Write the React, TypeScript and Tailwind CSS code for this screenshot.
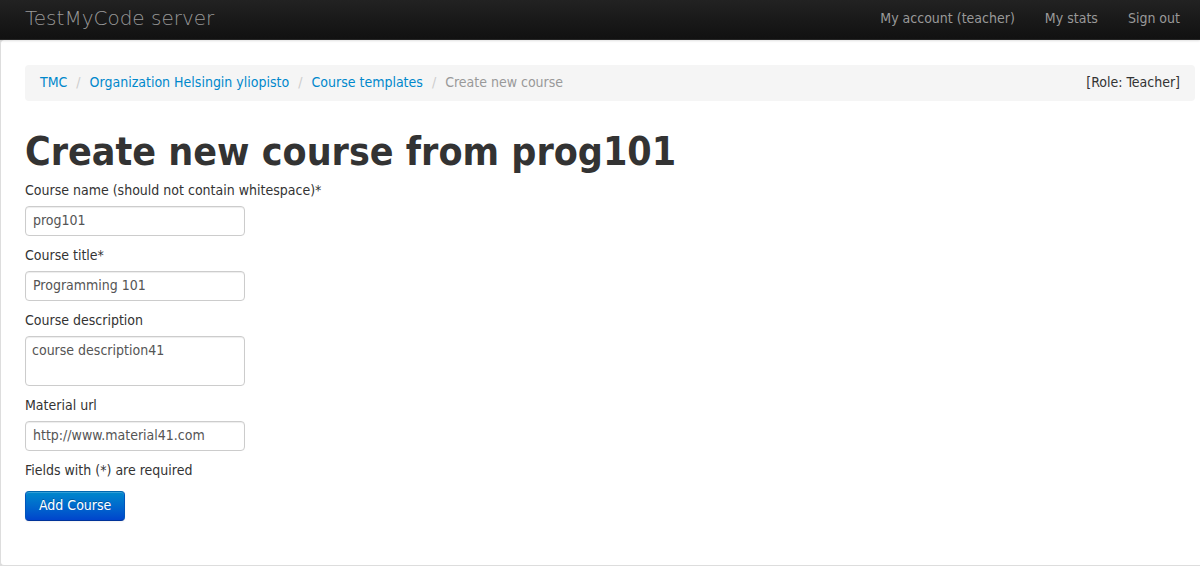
import type { ReactNode } from "react";

const navLinks = ["My account (teacher)", "My stats", "Sign out"];
const crumbs = ["TMC", "Organization Helsingin yliopisto", "Course templates"];

const control =
  "block w-[220px] rounded-[4px] border border-[#cccccc] bg-white text-sm leading-5 text-[#555555] shadow-[inset_0_1px_1px_rgba(0,0,0,0.075)] outline-none focus:border-[#52a8ec]";

function Field({ id, label, children }: { id: string; label: string; children: ReactNode }) {
  return (
    <div className="mb-2.5">
      <label htmlFor={id} className="mb-[7px] block">
        {label}
      </label>
      {children}
    </div>
  );
}

function TextField({ id, label, value }: { id: string; label: string; value: string }) {
  return (
    <Field id={id} label={label}>
      <input id={id} type="text" defaultValue={value} className={`${control} h-[30px] px-[7px] pt-[3px] pb-[5px]`} />
    </Field>
  );
}

export default function App() {
  return (
    <div className="bg-[#dddddd] font-['DejaVu_Sans_Condensed','DejaVu_Sans',sans-serif] text-sm leading-[18px] text-[#333333]">
      <header className="relative flex h-10 items-center justify-between border-b border-[#252525] bg-linear-to-b from-[#222222] to-[#111111] pr-5 pb-1 pl-[25px] shadow-[0_1px_2px_rgba(0,0,0,0.12)]">
        <a
          href="#"
          className="font-['DejaVu_Sans_Light','DejaVu_Sans',sans-serif] text-xl leading-5 font-extralight text-[#999999]"
        >
          TestMyCode server
        </a>
        <nav className="flex gap-[30px] text-[#999999]">
          {navLinks.map((link) => (
            <a key={link} href="#" className="hover:text-white">
              {link}
            </a>
          ))}
        </nav>
      </header>

      <main className="rounded-l-[4px] border-b border-l border-[#dddddd] bg-white pt-[25px] pr-[5px] pb-11 pl-6">
        <div className="mb-[30px] flex items-center justify-between rounded-[4px] bg-[#f5f5f5] px-[15px] pt-2 pb-2.5">
          <nav aria-label="Breadcrumb">
            <ol className="flex">
              {crumbs.map((crumb) => (
                <li key={crumb} className="flex">
                  <a href="#" className="text-[#0088cc] hover:underline">
                    {crumb}
                  </a>
                  <span className="px-[9px] text-[#cccccc]">/</span>
                </li>
              ))}
              <li className="text-[#999999]">Create new course</li>
            </ol>
          </nav>
          <span>[Role: Teacher]</span>
        </div>

        <h1 className="mb-2 text-[39px] leading-[42px] font-bold">Create new course from prog101</h1>

        <form onSubmit={(event) => event.preventDefault()}>
          <TextField id="name" label="Course name (should not contain whitespace)*" value="prog101" />
          <TextField id="title" label="Course title*" value="Programming 101" />
          <Field id="description" label="Course description">
            <textarea
              id="description"
              defaultValue="course description41"
              className={`${control} h-[50px] resize-none px-1.5 py-[3px]`}
            />
          </Field>
          <TextField id="material" label="Material url" value="http://www.material41.com" />
          <p className="mb-3">Fields with (*) are required</p>
          <button
            type="submit"
            className="block h-[30px] rounded-[4px] border border-[#0055bb] border-t-[#0067b0] border-b-[#003399] bg-linear-to-b from-[#0088cc] to-[#0044cc] px-[13px] pb-0.5 text-white shadow-[inset_0_1px_0_rgba(255,255,255,0.2),0_1px_2px_rgba(0,0,0,0.05)] text-shadow-[0_-1px_0_rgba(0,0,0,0.25)]"
          >
            Add Course
          </button>
        </form>
      </main>
    </div>
  );
}
